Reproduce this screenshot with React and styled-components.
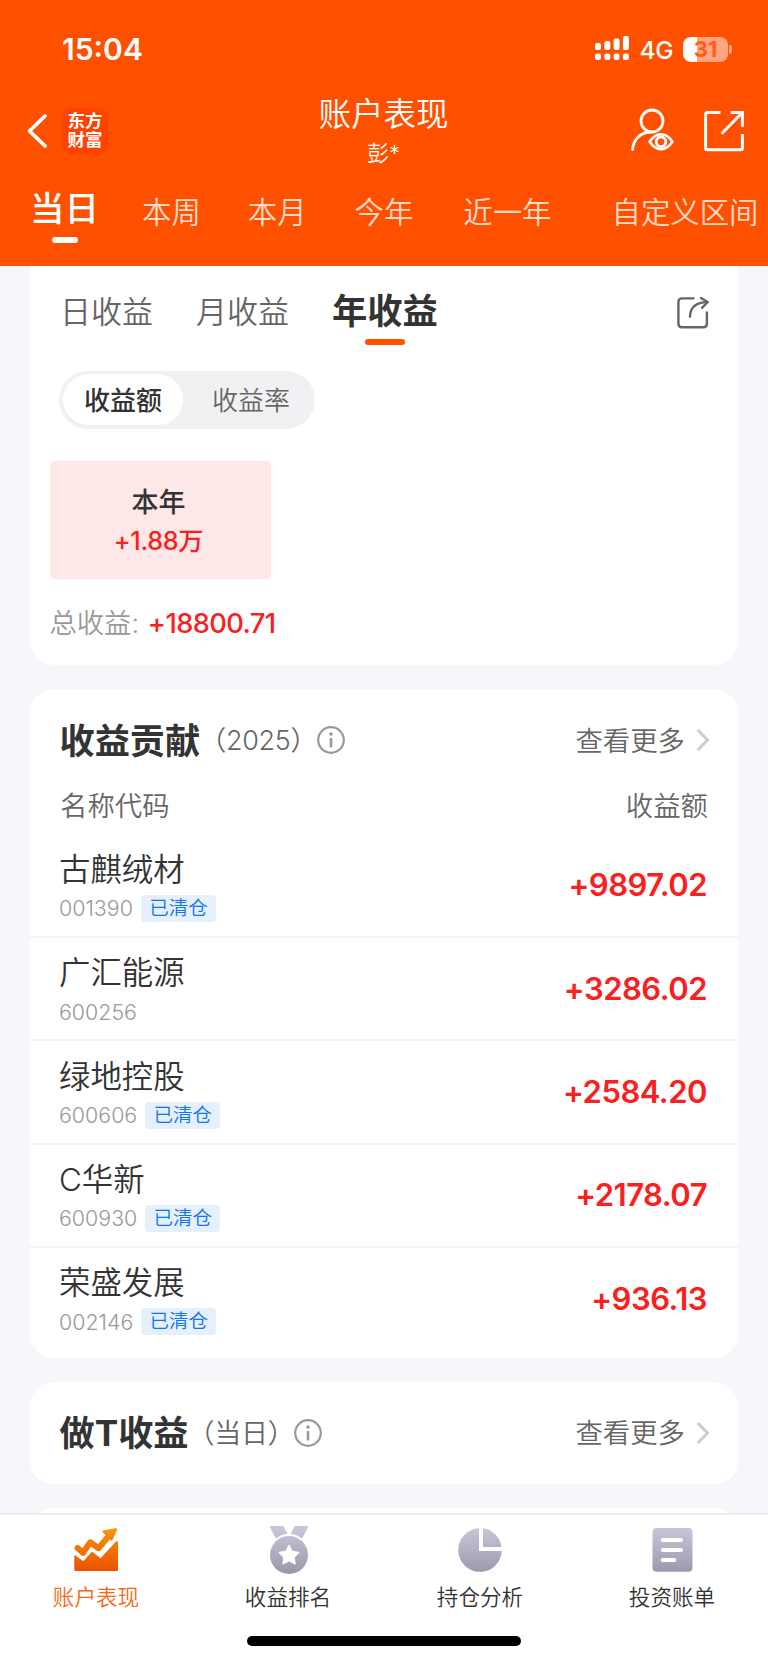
import styled, { createGlobalStyle } from "styled-components";

const tabs = [
  { label: "本周", left: 43 },
  { label: "本月", left: 47 },
  { label: "今年", left: 48 },
  { label: "近一年", left: 50 },
  { label: "自定义区间", left: 60 },
];

const stocks = [
  { name: "古麒绒材", code: "001390", cleared: true, amount: "+9897.02" },
  { name: "广汇能源", code: "600256", cleared: false, amount: "+3286.02" },
  { name: "绿地控股", code: "600606", cleared: true, amount: "+2584.20" },
  { name: "C华新", code: "600930", cleared: true, amount: "+2178.07" },
  { name: "荣盛发展", code: "002146", cleared: true, amount: "+936.13" },
];

const BackIcon = () => (
  <svg width="22" height="36" viewBox="0 0 22 36" fill="none">
    <path
      d="M19 3L3.5 18L19 33"
      stroke="white"
      strokeWidth="3.8"
      strokeLinecap="round"
      strokeLinejoin="round"
    />
  </svg>
);

const SignalIcon = () => (
  <svg width="34" height="28" viewBox="0 0 34 28" fill="white">
    {[8, 6, 3.5, 1].map((y, i) => (
      <g key={y}>
        <rect x={i * 9.3} y={y} width="6" height={15 - y} rx="2" />
        <rect x={i * 9.3} y="18.6" width="6" height="6.4" rx="2" />
      </g>
    ))}
  </svg>
);

const UserEyeIcon = () => (
  <svg width="46" height="46" viewBox="0 0 46 46" fill="none" stroke="white">
    <circle cx="22" cy="13" r="11" strokeWidth="2.8" />
    <path
      d="M2.6 41.5C3.2 31.5 10.8 24 21 24"
      strokeWidth="2.8"
      strokeLinecap="round"
    />
    <path
      d="M19.6 33.8Q24.5 26.3 31 26.3Q37.5 26.3 42.4 33.8Q37.5 41.2 31 41.2Q24.5 41.2 19.6 33.8Z"
      strokeWidth="2.6"
      strokeLinejoin="round"
    />
    <circle cx="31" cy="33.8" r="4.8" strokeWidth="2.8" />
  </svg>
);

const ExportIcon = () => (
  <svg
    width="43"
    height="43"
    viewBox="0 0 43 43"
    fill="none"
    stroke="white"
    strokeWidth="3"
  >
    <path d="M17.5 2.5H4.5Q2.6 2.5 2.6 4.4V38Q2.6 39.7 4.5 39.7H37.5Q39.4 39.7 39.4 38V24" />
    <path d="M27.5 2.5H39.4V16.8M39.4 2.5L18.5 23.8" />
  </svg>
);

const ShareIcon = () => (
  <svg
    width="35"
    height="34"
    viewBox="0 0 35 34"
    fill="none"
    stroke="#666"
    strokeWidth="2.4"
    strokeLinecap="round"
    strokeLinejoin="round"
  >
    <path d="M17.5 2.4H6Q2.4 2.4 2.4 6V27.8Q2.4 31.3 6 31.3H27.3Q30.9 31.3 30.9 27.8V16.5" />
    <path d="M14 20.6Q14.3 6.4 31.5 6.1" />
    <path d="M25 2L31.7 6L26 11.8" />
  </svg>
);

const InfoIcon = () => (
  <svg width="28" height="28" viewBox="0 0 28 28" fill="none">
    <circle cx="14" cy="14" r="12.8" stroke="#999" strokeWidth="2.2" />
    <circle cx="14" cy="8" r="1.8" fill="#999" />
    <path d="M14 12V21.5" stroke="#999" strokeWidth="2.6" />
  </svg>
);

const ChevronIcon = () => (
  <svg width="14" height="24" viewBox="0 0 14 24" fill="none">
    <path d="M1.8 2L11.5 12L1.8 22" stroke="#ccc" strokeWidth="3" />
  </svg>
);

const ChartIcon = () => (
  <svg width="50" height="50" viewBox="0 0 50 50">
    <defs>
      <linearGradient
        id="orange"
        gradientUnits="userSpaceOnUse"
        x1="0"
        y1="4"
        x2="0"
        y2="47"
      >
        <stop offset="0" stopColor="#f9940b" />
        <stop offset="1" stopColor="#ea5200" />
      </linearGradient>
    </defs>
    <path
      d="M3.3 32Q3.6 30.7 5 31.8L12.3 37.3L21 27.5L29.5 34.3L45 17.6Q46.8 16.2 47 18.5V45.5Q47 47 45.5 47H5Q3.3 47 3.3 45.5Z"
      fill="url(#orange)"
    />
    <path
      d="M6.6 24L12 28.7L19.2 18.3L27.5 24.2L39 10.5"
      fill="none"
      stroke="url(#orange)"
      strokeWidth="6"
      strokeLinecap="round"
      strokeLinejoin="round"
    />
    <path
      d="M31.5 8Q31 6.5 33 6.2L44.5 4.2Q46.8 4 46 6L41.5 16Q40.5 17.5 39.5 16Z"
      fill="url(#orange)"
    />
  </svg>
);

const GreyGradient = ({ id }) => (
  <defs>
    <linearGradient
      id={id}
      gradientUnits="userSpaceOnUse"
      x1="0"
      y1="4"
      x2="0"
      y2="48"
    >
      <stop offset="0" stopColor="#c8c6da" />
      <stop offset="1" stopColor="#9b99aa" />
    </linearGradient>
  </defs>
);

const MedalIcon = () => (
  <svg width="50" height="50" viewBox="0 0 50 50">
    <GreyGradient id="medal" />
    <g fill="url(#medal)">
      <path d="M7.6 2H20.2L24.5 9.7Q18 10.5 13 14.5L6.8 3Z" />
      <path d="M44.4 2H31.8L27.5 9.7Q34 10.5 39 14.5L45.2 3Z" />
      <circle cx="26" cy="31" r="19" />
    </g>
    <path
      d="M26 21.5L29 27.5L35.7 28.5L30.9 33.2L32 39.8L26 36.7L20 39.8L21.1 33.2L16.3 28.5L23 27.5Z"
      fill="white"
      stroke="white"
      strokeWidth="1.5"
      strokeLinejoin="round"
    />
  </svg>
);

const PieIcon = () => (
  <svg width="50" height="50" viewBox="0 0 50 50">
    <GreyGradient id="pie" />
    <g fill="url(#pie)">
      <path d="M24 4.3A21.8 21.8 0 1 0 46.8 27H24Z" />
      <path d="M28 4.3A21.8 21.8 0 0 1 46.5 23H28Z" />
    </g>
  </svg>
);

const BillIcon = () => (
  <svg width="50" height="50" viewBox="0 0 50 50">
    <GreyGradient id="bill" />
    <rect x="5.5" y="4" width="40" height="43.7" rx="4" fill="url(#bill)" />
    <path
      d="M15.7 16H34M15.7 26H34M15.7 36H27.3"
      stroke="white"
      strokeWidth="4"
      strokeLinecap="round"
    />
  </svg>
);

const navItems = [
  { label: "账户表现", icon: <ChartIcon />, active: true },
  { label: "收益排名", icon: <MedalIcon /> },
  { label: "持仓分析", icon: <PieIcon /> },
  { label: "投资账单", icon: <BillIcon /> },
];

const CardHeading = ({ title, note }) => (
  <HeadingRow>
    <Heading>{title}</Heading>
    <Note>（{note}）</Note>
    <InfoIcon />
    <More>
      <span>查看更多</span>
      <ChevronIcon />
    </More>
  </HeadingRow>
);

const App = () => {
  return (
    <Page>
      <GlobalStyle />
      <Header>
        <StatusBar>
          <Time>15:04</Time>
          <SignalIcon />
          <Network>4G</Network>
          <Battery>31</Battery>
          <BatteryCap />
        </StatusBar>
        <TitleBar>
          <TitleSide>
            <BackIcon />
            <Logo>
              东方
              <br />
              财富
            </Logo>
          </TitleSide>
          <TitleText>
            <h1>账户表现</h1>
            <p>彭*</p>
          </TitleText>
          <TitleSide $end>
            <UserEyeIcon />
            <ExportIcon />
          </TitleSide>
        </TitleBar>
        <Periods>
          <ActivePeriod>当日</ActivePeriod>
          {tabs.map((tab) => (
            <Period key={tab.label} $left={tab.left}>
              {tab.label}
            </Period>
          ))}
        </Periods>
      </Header>

      <Content>
        <ProfitCard>
          <ProfitTabs>
            <ProfitTab>日收益</ProfitTab>
            <ProfitTab>月收益</ProfitTab>
            <ProfitTab $active>年收益</ProfitTab>
            <ShareIcon />
          </ProfitTabs>
          <Segmented>
            <Segment $active>收益额</Segment>
            <Segment>收益率</Segment>
          </Segmented>
          <YearBox>
            <strong>本年</strong>
            <span>+1.88万</span>
          </YearBox>
          <Total>
            总收益: <span>+18800.71</span>
          </Total>
        </ProfitCard>

        <Card>
          <CardHeading title="收益贡献" note="2025" />
          <Columns>
            <span>名称代码</span>
            <span>收益额</span>
          </Columns>
          <List>
            {stocks.map((stock) => (
              <Row key={stock.code}>
                <Stock>
                  <Name>{stock.name}</Name>
                  <CodeLine>
                    {stock.code}
                    {stock.cleared && <Badge>已清仓</Badge>}
                  </CodeLine>
                </Stock>
                <Amount>{stock.amount}</Amount>
              </Row>
            ))}
          </List>
        </Card>

        <Card>
          <CardHeading title="做T收益" note="当日" />
        </Card>
        <Card />
      </Content>

      <BottomNav>
        <NavItems>
          {navItems.map((item) => (
            <NavItem key={item.label} $active={item.active}>
              {item.icon}
              {item.label}
            </NavItem>
          ))}
        </NavItems>
        <HomeIndicator />
      </BottomNav>
    </Page>
  );
};

export default App;

const GlobalStyle = createGlobalStyle`
  * {
    box-sizing: border-box;
    margin: 0;
    padding: 0;
  }

  body {
    font-family: Inter, "Noto Sans CJK SC", sans-serif;
    color: #333;
    background: #f6f7fa;
  }

  svg {
    display: block;
    flex-shrink: 0;
  }
`;

const Page = styled.div`
  display: flex;
  flex-direction: column;
  width: 768px;
  height: 1663px;
  overflow: hidden;
`;

const Header = styled.header`
  flex: none;
  height: 266px;
  background: #ff5000;
  color: white;
`;

const StatusBar = styled.div`
  display: flex;
  align-items: center;
  height: 92px;
  padding: 6px 36px 0 62px;
`;

const Time = styled.span`
  flex: 1;
  font-size: 30px;
  font-weight: 600;
`;

const Network = styled.span`
  margin: 1px 10px 0 11px;
  font-size: 24.5px;
  font-weight: 450;
  letter-spacing: -0.5px;
`;

const Battery = styled.div`
  width: 45px;
  height: 25px;
  border-radius: 8px;
  background: linear-gradient(90deg, white 14px, #ffa680 14px);
  color: #ff5f14;
  font-size: 22px;
  font-weight: 700;
  line-height: 25px;
  text-align: center;
`;

const BatteryCap = styled.div`
  width: 3px;
  height: 9px;
  margin-left: 1px;
  border-radius: 0 4px 4px 0;
  background: #ffa680;
`;

const TitleBar = styled.div`
  display: flex;
  justify-content: space-between;
  height: 84px;
  padding: 0 22px 0 26px;
`;

const TitleSide = styled.div`
  display: flex;
  align-items: center;
  justify-content: ${(props) => (props.$end ? "flex-end" : "flex-start")};
  gap: ${(props) => (props.$end ? "27px" : "14px")};
  width: ${(props) => (props.$end ? "150px" : "145px")};
  height: 78px;
`;

const Logo = styled.div`
  width: 46px;
  height: 46px;
  padding-top: 3px;
  border-radius: 9px;
  background: #ff4200;
  font-size: 17.5px;
  font-weight: 700;
  line-height: 19px;
  text-align: center;
`;

const TitleText = styled.div`
  text-align: center;

  h1 {
    padding-top: 1px;
    font-size: 32.5px;
    font-weight: 350;
    line-height: 44px;
  }

  p {
    font-size: 22px;
    font-weight: 350;
    line-height: 32px;
  }
`;

const Periods = styled.nav`
  display: flex;
  height: 90px;
  padding-left: 30px;
  white-space: nowrap;
`;

const ActivePeriod = styled.span`
  display: flex;
  flex-direction: column;
  align-items: center;
  font-size: 34.5px;
  font-weight: 500;
  line-height: 66px;

  &::after {
    content: "";
    width: 26px;
    height: 6px;
    margin-top: -5px;
    border-radius: 3px;
    background: white;
  }
`;

const Period = styled.span`
  margin-left: ${(props) => props.$left}px;
  color: rgba(255, 255, 255, 0.8);
  font-size: 29.4px;
  font-weight: 350;
  line-height: 74px;
`;

const Content = styled.main`
  display: flex;
  flex: 1;
  flex-direction: column;
  min-height: 0;
  overflow: hidden;
  padding: 0 30px;

  > * + * {
    margin-top: 24px;
  }
`;

const Card = styled.section`
  flex: none;
  min-height: 102px;
  border-radius: 24px;
  background: white;
`;

const ProfitCard = styled(Card)`
  height: 413px;
  margin-top: -14px;
  padding: 14px 27px 0 29px;
`;

const ProfitTabs = styled.div`
  display: flex;
  height: 105px;
  padding: 15px 0 0 1px;

  svg {
    margin: 15px 0 0 auto;
  }
`;

const ProfitTab = styled.span`
  display: flex;
  flex-direction: column;
  align-items: center;
  margin-right: 43px;
  color: ${(props) => (props.$active ? "#333" : "#666")};
  font-size: ${(props) => (props.$active ? "35.3px" : "31px")};
  font-weight: ${(props) => (props.$active ? 700 : 350)};
  line-height: 62px;

  &::after {
    content: "";
    display: ${(props) => (props.$active ? "block" : "none")};
    width: 40px;
    height: 6px;
    margin-top: -4px;
    border-radius: 3px;
    background: #ff5000;
  }
`;

const Segmented = styled.div`
  display: flex;
  width: 256px;
  height: 58px;
  padding: 3px 4px 4px;
  border-radius: 29px;
  background: #f1f1f4;
`;

const Segment = styled.button`
  flex: ${(props) => (props.$active ? "0 0 120px" : "1")};
  padding: 0 0 2px ${(props) => (props.$active ? 0 : 8)}px;
  border: none;
  border-radius: 26px;
  background: ${(props) => (props.$active ? "white" : "none")};
  color: ${(props) => (props.$active ? "#333" : "#666")};
  font: ${(props) => (props.$active ? 500 : 350)} 26px Inter,
    "Noto Sans CJK SC", sans-serif;
`;

const YearBox = styled.div`
  display: flex;
  flex-direction: column;
  justify-content: center;
  width: 221px;
  height: 118px;
  margin: 32px 0 0 -9.5px;
  padding: 2px 3px 0 0;
  border-radius: 5px;
  background: #fde7e7;
  text-align: center;

  strong {
    font-size: 27px;
    font-weight: 500;
    line-height: 39px;
  }

  span {
    color: #fa2020;
    font-size: 25.2px;
    font-weight: 500;
    letter-spacing: -0.3px;
    line-height: 38px;
  }
`;

const Total = styled.p`
  margin: 25px 0 0 -9.5px;
  color: #999;
  font-size: 27.3px;
  font-weight: 350;
  line-height: 40px;

  span {
    margin-left: 1px;
    color: #fa2020;
    font-weight: 500;
    letter-spacing: -0.6px;
  }
`;

const HeadingRow = styled.div`
  display: flex;
  align-items: center;
  height: 102px;
  padding: 0 28px 0 29.5px;
`;

const Heading = styled.h2`
  padding-bottom: 4px;
  font-size: 35.2px;
  font-weight: 700;
`;

const Note = styled.span`
  margin: 0 -0.5px 0 -1px;
  padding-bottom: 3px;
  color: #666;
  font-size: 27px;
  font-weight: 350;
  letter-spacing: -0.3px;
`;

const More = styled.span`
  display: flex;
  align-items: center;
  gap: 11px;
  margin-left: auto;
  color: #666;
  font-size: 27.4px;
  font-weight: 350;

  span {
    padding-bottom: 3px;
  }
`;

const Columns = styled.div`
  display: flex;
  justify-content: space-between;
  padding: 0 30px;
  color: #666;
  font-size: 27.4px;
  font-weight: 350;
  line-height: 31px;
`;

const List = styled.ul`
  padding: 12.6px 0 6.1px;
  list-style: none;
`;

const Row = styled.li`
  display: flex;
  align-items: center;
  justify-content: space-between;
  height: 103.4px;
  padding: 0 31px 0 29px;
  border-bottom: 2px solid #f4f4f6;

  &:last-child {
    border-bottom-color: transparent;
  }
`;

const Stock = styled.div`
  padding-top: 6px;
`;

const Name = styled.p`
  font-size: 31.4px;
  font-weight: 350;
  line-height: 40px;
`;

const CodeLine = styled.div`
  display: flex;
  align-items: center;
  gap: 8px;
  height: 37px;
  color: #999;
  font-size: 21.4px;
  font-weight: 350;
`;

const Badge = styled.span`
  width: 75px;
  height: 27px;
  border-radius: 4px;
  background: #e6f0fb;
  color: #0f75ee;
  font-size: 19.5px;
  line-height: 27px;
  text-align: center;
`;

const Amount = styled.span`
  padding-bottom: 1px;
  color: #fa2020;
  font-size: 31px;
  font-weight: 580;
  letter-spacing: -0.5px;
`;

const BottomNav = styled.footer`
  flex: none;
  height: 150px;
  border-top: 2px solid #ededef;
  background: white;
`;

const NavItems = styled.div`
  display: grid;
  grid-template-columns: repeat(4, 1fr);
  height: 121px;
  padding-top: 9px;
`;

const NavItem = styled.div`
  display: flex;
  flex-direction: column;
  align-items: center;
  color: ${(props) => (props.$active ? "#f06a14" : "#333")};
  font-size: 21.6px;
  font-weight: 350;
  line-height: 46px;
`;

const HomeIndicator = styled.div`
  width: 274px;
  height: 10px;
  margin: 0 auto;
  border-radius: 5px;
  background: black;
`;
